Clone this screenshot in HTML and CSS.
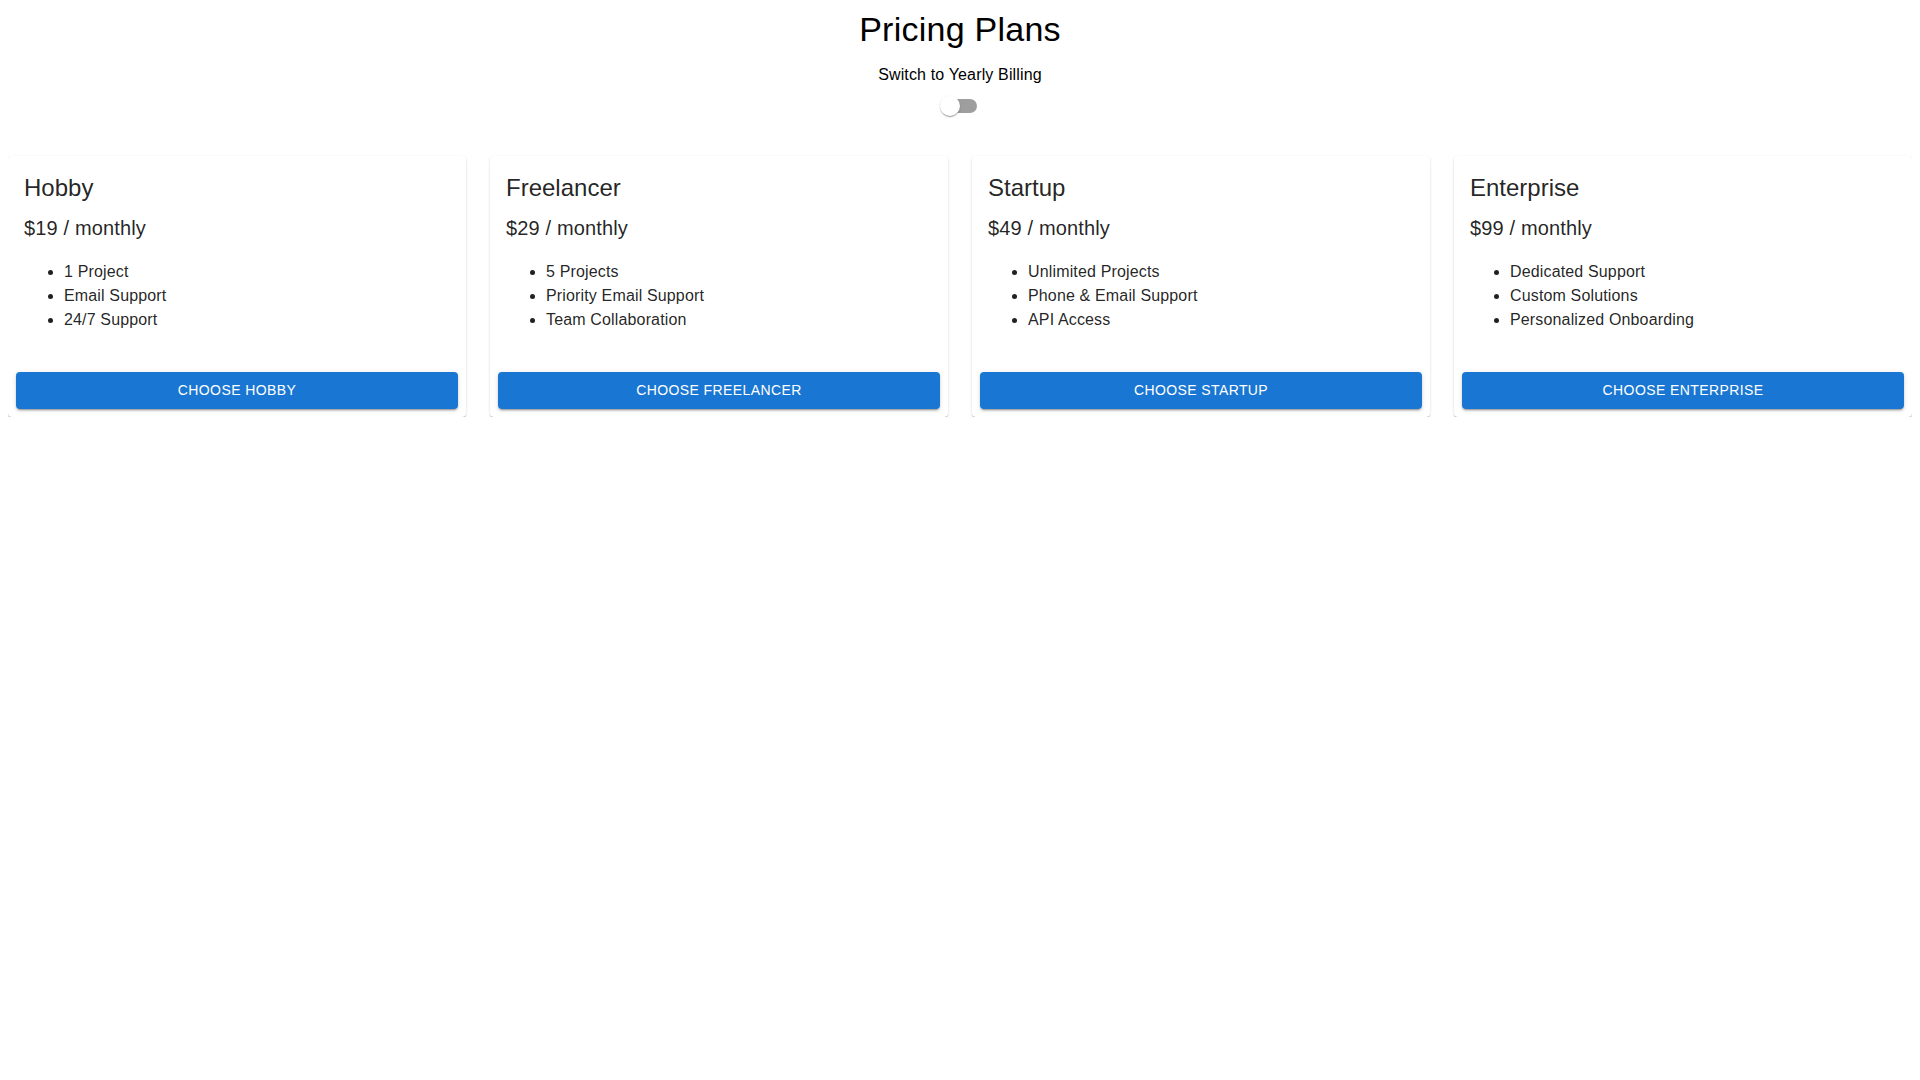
FILE: index.html
```html
<!DOCTYPE html>
<html lang="en">
<head>
<meta charset="utf-8">
<title>Pricing Plans</title>
<link rel="stylesheet" href="styles.css">
</head>
<body>
<header class="header">
  <h1 class="title">Pricing Plans</h1>
  <label class="toggle">
    <span class="toggle-label">Switch to Yearly Billing</span>
    <span class="switch">
      <span class="switch-track"></span>
      <span class="switch-thumb"></span>
    </span>
  </label>
</header>
<main class="grid">
  <div class="card">
    <div class="card-content">
      <h2 class="plan-name">Hobby</h2>
      <h3 class="plan-price">$19 / monthly</h3>
      <ul class="features">
        <li>1 Project</li>
        <li>Email Support</li>
        <li>24/7 Support</li>
      </ul>
    </div>
    <div class="card-actions"><button class="btn">Choose Hobby</button></div>
  </div>
  <div class="card">
    <div class="card-content">
      <h2 class="plan-name">Freelancer</h2>
      <h3 class="plan-price">$29 / monthly</h3>
      <ul class="features">
        <li>5 Projects</li>
        <li>Priority Email Support</li>
        <li>Team Collaboration</li>
      </ul>
    </div>
    <div class="card-actions"><button class="btn">Choose Freelancer</button></div>
  </div>
  <div class="card">
    <div class="card-content">
      <h2 class="plan-name">Startup</h2>
      <h3 class="plan-price">$49 / monthly</h3>
      <ul class="features">
        <li>Unlimited Projects</li>
        <li>Phone &amp; Email Support</li>
        <li>API Access</li>
      </ul>
    </div>
    <div class="card-actions"><button class="btn">Choose Startup</button></div>
  </div>
  <div class="card">
    <div class="card-content">
      <h2 class="plan-name">Enterprise</h2>
      <h3 class="plan-price">$99 / monthly</h3>
      <ul class="features">
        <li>Dedicated Support</li>
        <li>Custom Solutions</li>
        <li>Personalized Onboarding</li>
      </ul>
    </div>
    <div class="card-actions"><button class="btn">Choose Enterprise</button></div>
  </div>
</main>
</body>
</html>
```
FILE: styles.css
```css
html, body {
  background: #fff;
}
body {
  margin: 8px;
  font-family: "Liberation Sans", Arial, Helvetica, sans-serif;
  color: #000;
}
.header {
  display: flex;
  flex-direction: column;
  align-items: center;
}
.title {
  margin: 0 0 12.5px;
  font-size: 34px;
  font-weight: 400;
  line-height: 42px;
  letter-spacing: 0.00735em;
}
.toggle {
  display: flex;
  flex-direction: column;
  align-items: center;
  cursor: pointer;
}
.toggle-label {
  font-size: 16px;
  line-height: 24px;
  letter-spacing: 0.00938em;
}
.switch {
  position: relative;
  display: block;
  width: 58px;
  height: 38px;
}
.switch-track {
  position: absolute;
  left: 12px;
  top: 12px;
  width: 34px;
  height: 14px;
  border-radius: 7px;
  background: #000;
  opacity: 0.38;
}
.switch-thumb {
  position: absolute;
  left: 9px;
  top: 9px;
  width: 20px;
  height: 20px;
  border-radius: 50%;
  background: #fff;
  box-shadow: 0px 2px 1px -1px rgba(0,0,0,0.2), 0px 1px 1px 0px rgba(0,0,0,0.14), 0px 1px 3px 0px rgba(0,0,0,0.12);
}
.grid {
  display: grid;
  grid-template-columns: repeat(4, 1fr);
  gap: 24px;
  margin-top: 31.5px;
}
.card {
  background: #fff;
  border-radius: 4px;
  box-shadow: 0px 2px 1px -1px rgba(0,0,0,0.2), 0px 1px 1px 0px rgba(0,0,0,0.14), 0px 1px 3px 0px rgba(0,0,0,0.12);
  color: rgba(0,0,0,0.87);
  display: flex;
  flex-direction: column;
  overflow: hidden;
}
.card-content {
  padding: 16px;
}
.plan-name {
  margin: 0 0 8.4px;
  font-size: 24px;
  font-weight: 400;
  line-height: 32px;
}
.plan-price {
  margin: 0;
  font-size: 20px;
  font-weight: 400;
  line-height: 32px;
  letter-spacing: 0.0075em;
}
.features {
  margin: 16px 0;
  padding-left: 40px;
  font-size: 16px;
  line-height: 24px;
  letter-spacing: 0.00938em;
}
.card-actions {
  padding: 8px;
  display: flex;
}
.btn {
  flex: 1;
  border: 0;
  border-radius: 4px;
  background: #1976d2;
  color: #fff;
  font-family: "Liberation Sans", Arial, Helvetica, sans-serif;
  font-size: 14px;
  font-weight: 400;
  line-height: 24.5px;
  letter-spacing: 0.02857em;
  text-transform: uppercase;
  padding: 6px 16px;
  box-shadow: 0px 3px 1px -2px rgba(0,0,0,0.2), 0px 2px 2px 0px rgba(0,0,0,0.14), 0px 1px 5px 0px rgba(0,0,0,0.12);
  cursor: pointer;
}
```
